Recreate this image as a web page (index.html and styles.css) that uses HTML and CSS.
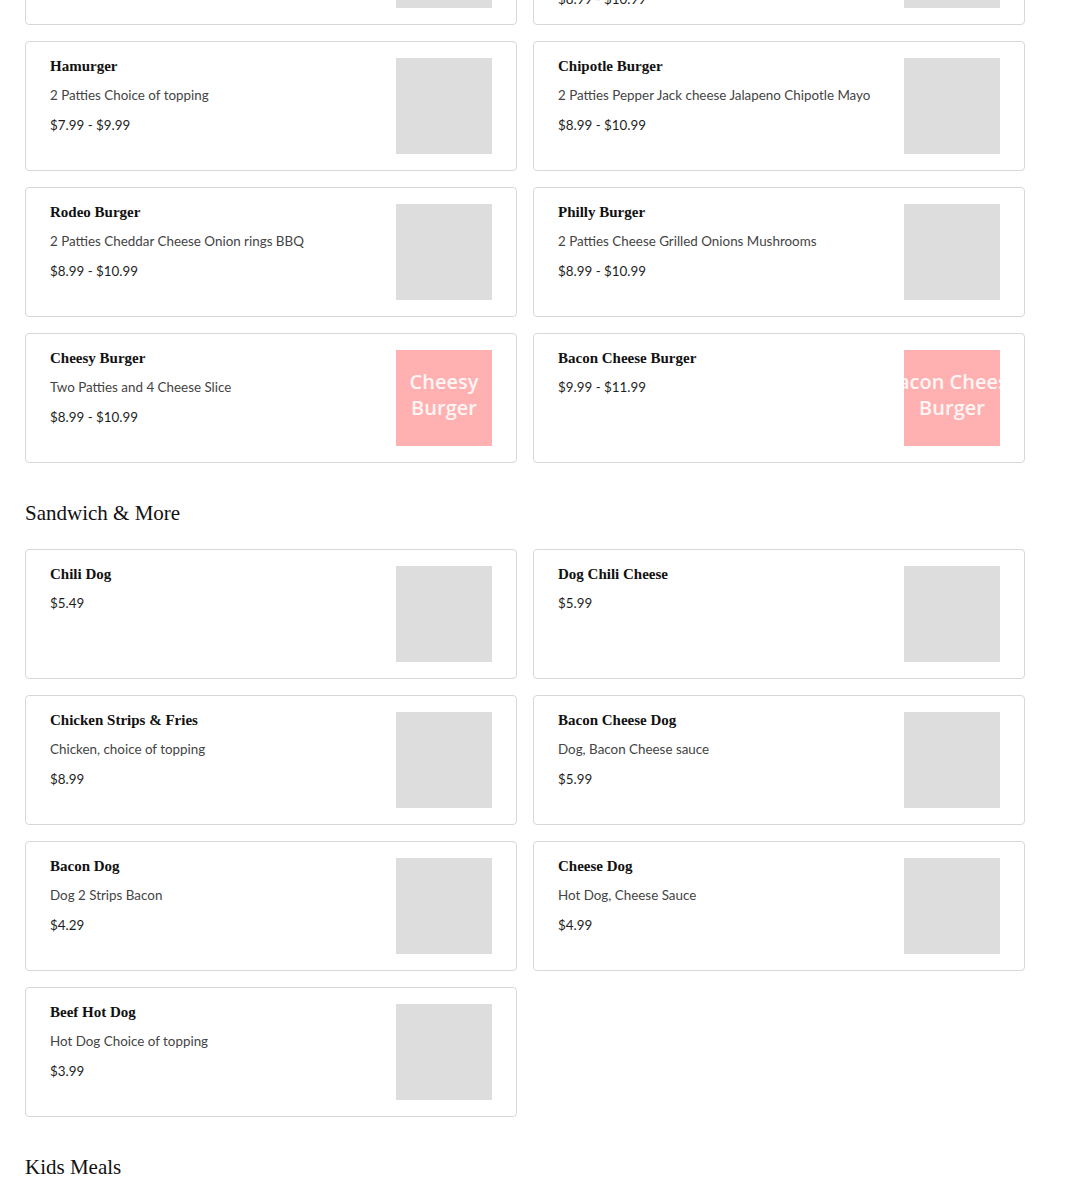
FILE: index.html
```html
<!DOCTYPE html>
<html lang="en">
<head>
<meta charset="utf-8">
<title>Menu</title>
<link rel="stylesheet" href="styles.css">
</head>
<body>
<main class="menu">
  <section class="section section-first">
    <div class="grid">
      <div class="card">
        <div class="info">
          <h3 class="name">Double Burger</h3>
          <p class="desc">2 Patties Cheese</p>
          <p class="price">$7.99 - $9.99</p>
        </div>
        <div class="thumb"></div>
      </div>
      <div class="card">
        <div class="info">
          <h3 class="name">Mushroom Swiss Burger</h3>
          <p class="desc">2 Patties Swiss Cheese Grilled Mushrooms Grilled Onions Mayo Lettuce Tomato Pickles</p>
          <p class="price">$8.99 - $10.99</p>
        </div>
        <div class="thumb"></div>
      </div>
      <div class="card">
        <div class="info">
          <h3 class="name">Hamurger</h3>
          <p class="desc">2 Patties Choice of topping</p>
          <p class="price">$7.99 - $9.99</p>
        </div>
        <div class="thumb"></div>
      </div>
      <div class="card">
        <div class="info">
          <h3 class="name">Chipotle Burger</h3>
          <p class="desc">2 Patties Pepper Jack cheese Jalapeno Chipotle Mayo</p>
          <p class="price">$8.99 - $10.99</p>
        </div>
        <div class="thumb"></div>
      </div>
      <div class="card">
        <div class="info">
          <h3 class="name">Rodeo Burger</h3>
          <p class="desc">2 Patties Cheddar Cheese Onion rings BBQ</p>
          <p class="price">$8.99 - $10.99</p>
        </div>
        <div class="thumb"></div>
      </div>
      <div class="card">
        <div class="info">
          <h3 class="name">Philly Burger</h3>
          <p class="desc">2 Patties Cheese Grilled Onions Mushrooms</p>
          <p class="price">$8.99 - $10.99</p>
        </div>
        <div class="thumb"></div>
      </div>
      <div class="card">
        <div class="info">
          <h3 class="name">Cheesy Burger</h3>
          <p class="desc">Two Patties and 4 Cheese Slice</p>
          <p class="price">$8.99 - $10.99</p>
        </div>
        <div class="thumb thumb-pink"><span>Cheesy</span><span>Burger</span></div>
      </div>
      <div class="card">
        <div class="info">
          <h3 class="name">Bacon Cheese Burger</h3>
          <p class="price">$9.99 - $11.99</p>
        </div>
        <div class="thumb thumb-pink"><span>Bacon Cheese</span><span>Burger</span></div>
      </div>
    </div>
  </section>

  <section class="section">
    <h2 class="section-title">Sandwich &amp; More</h2>
    <div class="grid">
      <div class="card">
        <div class="info">
          <h3 class="name">Chili Dog</h3>
          <p class="price">$5.49</p>
        </div>
        <div class="thumb"></div>
      </div>
      <div class="card">
        <div class="info">
          <h3 class="name">Dog Chili Cheese</h3>
          <p class="price">$5.99</p>
        </div>
        <div class="thumb"></div>
      </div>
      <div class="card">
        <div class="info">
          <h3 class="name">Chicken Strips &amp; Fries</h3>
          <p class="desc">Chicken, choice of topping</p>
          <p class="price">$8.99</p>
        </div>
        <div class="thumb"></div>
      </div>
      <div class="card">
        <div class="info">
          <h3 class="name">Bacon Cheese Dog</h3>
          <p class="desc">Dog, Bacon Cheese sauce</p>
          <p class="price">$5.99</p>
        </div>
        <div class="thumb"></div>
      </div>
      <div class="card">
        <div class="info">
          <h3 class="name">Bacon Dog</h3>
          <p class="desc">Dog 2 Strips Bacon</p>
          <p class="price">$4.29</p>
        </div>
        <div class="thumb"></div>
      </div>
      <div class="card">
        <div class="info">
          <h3 class="name">Cheese Dog</h3>
          <p class="desc">Hot Dog, Cheese Sauce</p>
          <p class="price">$4.99</p>
        </div>
        <div class="thumb"></div>
      </div>
      <div class="card">
        <div class="info">
          <h3 class="name">Beef Hot Dog</h3>
          <p class="desc">Hot Dog Choice of topping</p>
          <p class="price">$3.99</p>
        </div>
        <div class="thumb"></div>
      </div>
    </div>
  </section>

  <section class="section">
    <h2 class="section-title">Kids Meals</h2>
    <div class="grid">
      <div class="card">
        <div class="info">
          <h3 class="name">Kids Burger</h3>
          <p class="price">$5.99</p>
        </div>
        <div class="thumb"></div>
      </div>
    </div>
  </section>
</main>
</body>
</html>
```

FILE: styles.css
```css
html, body {
  margin: 0;
  padding: 0;
  background: #ffffff;
}

body {
  font-family: "Lato", "Liberation Sans", sans-serif;
  color: #222;
}

.menu {
  padding: 0 25px;
  margin-top: -105px;
}

.section-title {
  margin: 37px 0 23px;
  font-family: "Liberation Serif", "DejaVu Serif", serif;
  font-weight: 400;
  font-size: 21px;
  line-height: 26px;
  color: #111;
}

.grid {
  display: grid;
  grid-template-columns: 492px 492px;
  gap: 16px;
}

.card {
  box-sizing: border-box;
  height: 130px;
  border: 1px solid #d8d8d8;
  border-radius: 4px;
  padding: 16px 24px;
  display: flex;
  justify-content: space-between;
  align-items: flex-start;
  background: #fff;
}

.info {
  display: flex;
  flex-direction: column;
  gap: 10px;
  min-width: 0;
  padding-right: 16px;
}

.name {
  margin: 0 0 1px;
  font-family: "Liberation Serif", "DejaVu Serif", serif;
  font-weight: 700;
  font-size: 15px;
  line-height: 16px;
  color: #111;
}

.desc {
  margin: 0;
  font-size: 13.4px;
  line-height: 20px;
  color: #444;
}

.price {
  margin: 0;
  font-size: 13.4px;
  line-height: 20px;
  color: #1e1e1e;
}

.thumb {
  flex: 0 0 96px;
  width: 96px;
  height: 96px;
  background: #dddddd;
}

.thumb-pink {
  box-sizing: border-box;
  background: #ffb1b1;
  overflow: hidden;
  display: flex;
  flex-direction: column;
  align-items: center;
  justify-content: center;
  padding-bottom: 6px;
  font-family: "Open Sans", "Noto Sans", sans-serif;
  font-weight: 600;
  font-size: 20px;
  line-height: 26px;
  color: rgba(255, 255, 255, 0.9);
}

.thumb-pink span {
  white-space: nowrap;
}
```
